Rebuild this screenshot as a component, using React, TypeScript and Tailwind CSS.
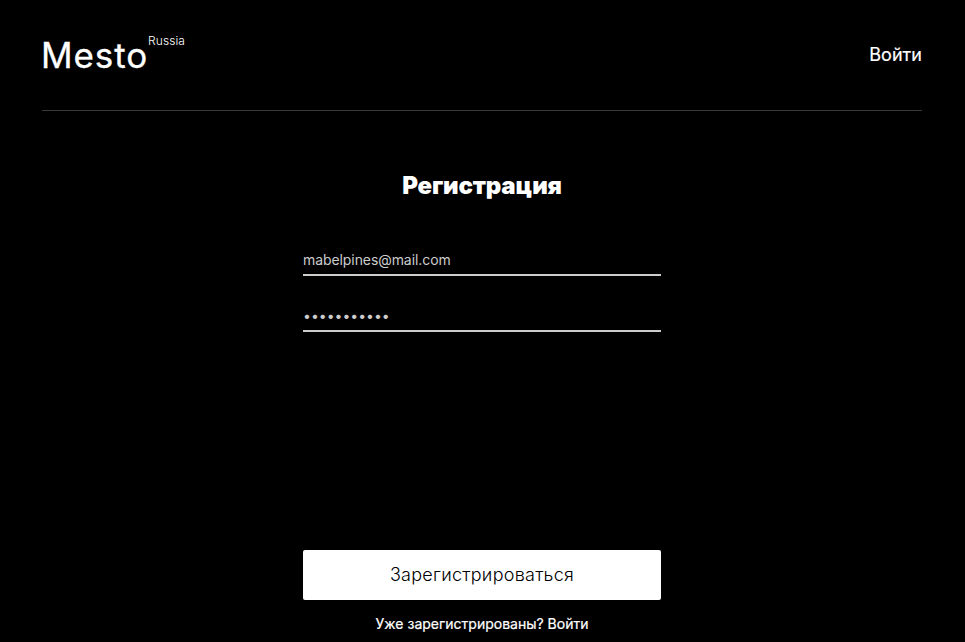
import React from "react";

export default function App() {
  return (
    <div className="flex h-[642px] w-[965px] flex-col overflow-hidden bg-black px-[42px] font-[Inter,sans-serif] text-white">
      <header className="flex h-[111px] w-[880px] shrink-0 justify-between border-b border-[#545454]/70">
        <h1 className="flex items-start whitespace-nowrap">
          <span className="-ml-px mt-[33px] w-[107px] text-[35px] leading-[44px] tracking-[0.9px] [-webkit-text-stroke:0.3px_white]">Mesto</span>
          <span className="mt-[33px] text-[12px] font-light leading-[16px] tracking-[0.1px]">Russia</span>
        </h1>
        <a className="mt-[44px] text-[18px] leading-[22px] tracking-[0.05px] [-webkit-text-stroke:0.2px_white]">Войти</a>
      </header>
      <main className="flex w-[880px] flex-col items-center">
        <h2 className="mt-[60px] text-[24px] font-black leading-[29px] tracking-[-0.17px]">Регистрация</h2>
        <form className="mt-[51px] flex w-[358px] flex-col">
          <div className="h-[25px] border-b-2 border-[#cccccc] text-[14px] leading-[17px] tracking-[-0.08px] text-[#cccccc]">mabelpines@mail.com</div>
          <input type="password" readOnly value="12345678901" className="mt-[31px] h-[25px] border-b-2 border-[#cccccc] bg-transparent pb-[6px] text-[14px] leading-[17px] text-[#cccccc] outline-none" />
          <button type="button" className="mt-[218px] h-[50px] rounded-[2px] bg-white text-[18px] font-light leading-[22px] tracking-[0.26px] text-black">Зарегистрироваться</button>
        </form>
        <p className="mt-[15px] text-[14px] leading-[17px] [-webkit-text-stroke:0.2px_white]">Уже зарегистрированы? Войти</p>
      </main>
    </div>
  );
}
